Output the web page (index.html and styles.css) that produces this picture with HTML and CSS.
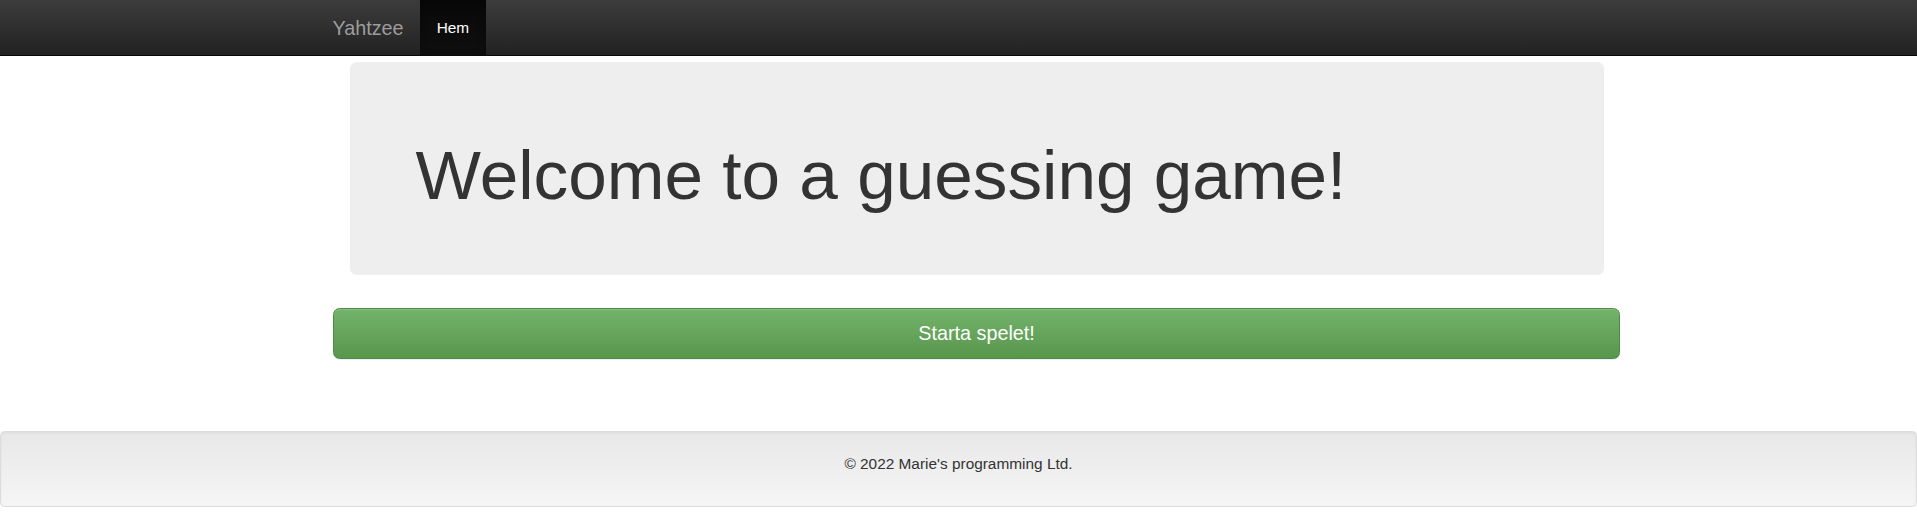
FILE: index.html
```html
<!DOCTYPE html>
<html lang="sv">
<head>
<meta charset="utf-8">
<title>Yahtzee</title>
<link rel="stylesheet" href="styles.css">
</head>
<body>
<nav class="navbar">
  <div class="navbar-inner">
    <a class="brand" href="#">Yahtzee</a>
    <ul class="nav">
      <li class="nav-item active"><a href="#">Hem</a></li>
    </ul>
  </div>
</nav>
<main class="container">
  <div class="jumbotron">
    <h1>Welcome to a guessing game!</h1>
  </div>
  <button class="btn-start" type="button">Starta spelet!</button>
</main>
<footer class="footer">
  <p>© 2022 Marie's programming Ltd.</p>
</footer>
</body>
</html>
```

FILE: styles.css
```css
html, body {
  margin: 0;
  padding: 0;
}
body {
  font-family: "Liberation Sans", Arial, Helvetica, sans-serif;
  color: #333;
  background: #fff;
}
.navbar {
  height: 55px;
  border-bottom: 1px solid #080808;
  background-image: linear-gradient(to bottom, #3c3c3c 0, #222 100%);
}
.navbar-inner {
  display: flex;
  height: 55px;
  padding-left: 316px;
}
.brand {
  display: block;
  padding: 16.5px;
  font-size: 19.8px;
  line-height: 22px;
  color: #9d9d9d;
  text-decoration: none;
}
.nav {
  display: flex;
  list-style: none;
  margin: 0;
  padding: 0;
}
.nav-item a {
  display: block;
  padding: 16.5px;
  font-size: 15.4px;
  line-height: 22px;
  color: #9d9d9d;
  text-decoration: none;
}
.nav-item.active a {
  color: #fff;
  background-image: linear-gradient(to bottom, #080808 0, #0f0f0f 100%);
  box-shadow: inset 0 3px 9px rgba(0, 0, 0, 0.25);
}
.container {
  width: 1287px;
  margin: 6px 0 0 333px;
}
.jumbotron {
  margin: 0 16.5px 33px;
  padding: 52.5px 66px 51.5px;
  background: #eee;
  border-radius: 6.6px;
}
.jumbotron h1 {
  margin: 22px 0 11px;
  font-size: 69.3px;
  line-height: 1.1;
  font-weight: normal;
  color: #333;
}
.btn-start {
  display: block;
  width: 100%;
  padding: 11px 17.6px;
  font-family: inherit;
  font-size: 19.8px;
  line-height: 26.4px;
  color: #fff;
  text-align: center;
  border: 1px solid #4d8c45;
  border-radius: 6.6px;
  background-image: linear-gradient(to bottom, #74b36b 0, #57964b 100%);
  box-shadow: inset 0 1px 0 rgba(255, 255, 255, 0.15), 0 1px 1px rgba(0, 0, 0, 0.075);
  cursor: pointer;
}
.footer {
  margin-top: 72px;
  padding: 20.9px;
  border: 1px solid #dcdcdc;
  border-radius: 4.4px;
  background-image: linear-gradient(to bottom, #e8e8e8 0, #f5f5f5 100%);
  box-shadow: inset 0 1px 3px rgba(0, 0, 0, 0.05), 0 1px 0 rgba(255, 255, 255, 0.1);
  text-align: center;
}
.footer p {
  margin: 0 0 11px;
  font-size: 15.4px;
  line-height: 22px;
  color: #333;
}
```
